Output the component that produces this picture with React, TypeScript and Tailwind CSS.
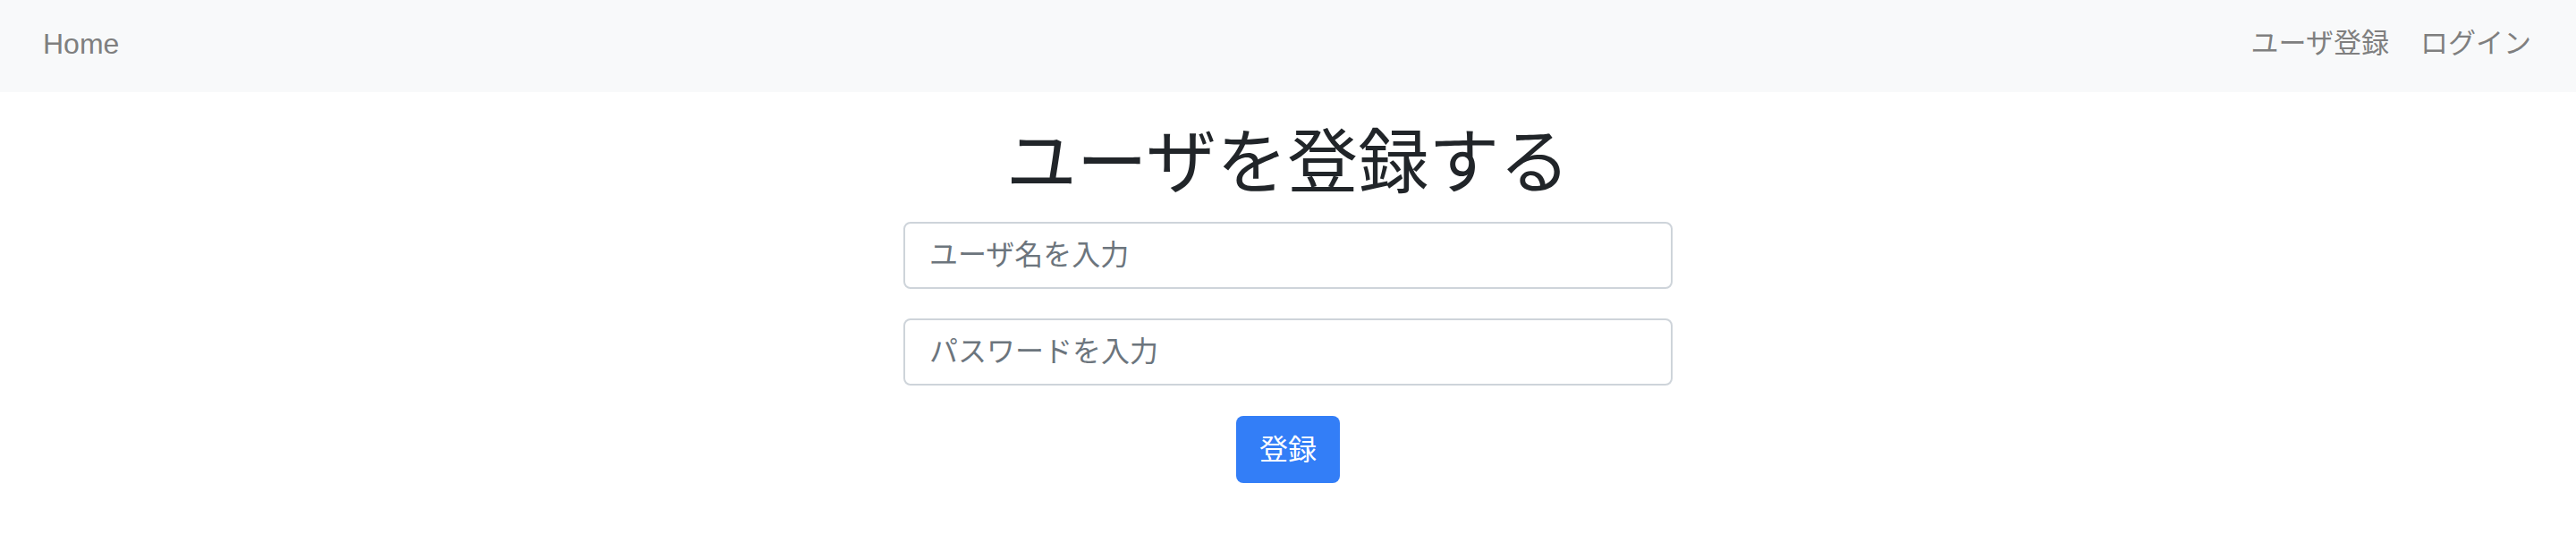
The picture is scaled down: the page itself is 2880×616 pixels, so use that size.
export default function App() {
  return (
    <div className="min-h-screen bg-white font-['Liberation_Sans','Noto_Sans_CJK_JP',sans-serif]">
      <nav className="h-[103px] bg-[#f8f9fa] flex items-center justify-between pl-[48px] pr-[50px] pb-[5px]">
        <a href="/" className="text-[32px] text-[#7f7f7f]">Home</a>
        <div className="flex items-center gap-[35px] text-[31px] text-[#7f7f7f]">
          <a href="/signup">ユーザ登録</a>
          <a href="/login">ログイン</a>
        </div>
      </nav>

      <main className="flex flex-col items-center pt-[33px]">
        <h1 className="h-[94px] leading-[94px] text-[79px] text-[#212529] mb-[18px]">
          ユーザを登録する
        </h1>
        <form className="w-[860px] flex flex-col items-center">
          <input
            type="text"
            placeholder="ユーザ名を入力"
            className="w-full h-[75px] px-[27px] text-[32px] border-2 border-[#ced4da] rounded-[8px] placeholder:text-[#6c757d] outline-none"
          />
          <input
            type="password"
            placeholder="パスワードを入力"
            className="w-full h-[75px] mt-[33px] px-[27px] text-[32px] border-2 border-[#ced4da] rounded-[8px] placeholder:text-[#6c757d] outline-none"
          />
          <button
            type="submit"
            className="mt-[34px] w-[116px] h-[75px] bg-[#337ef7] text-white text-[32px] rounded-[8px]"
          >
            登録
          </button>
        </form>
      </main>
    </div>
  );
}
